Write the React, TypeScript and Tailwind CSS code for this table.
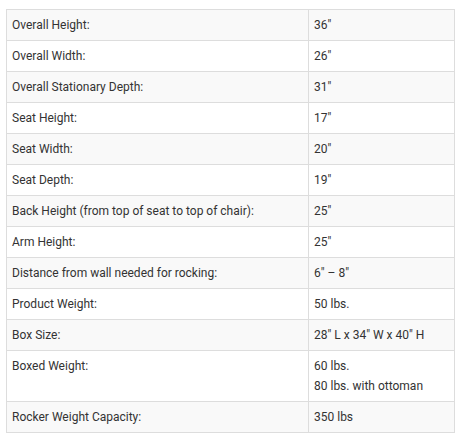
const specs: [string, string[]][] = [
  ["Overall Height:", ['36"']],
  ["Overall Width:", ['26"']],
  ["Overall Stationary Depth:", ['31"']],
  ["Seat Height:", ['17"']],
  ["Seat Width:", ['20"']],
  ["Seat Depth:", ['19"']],
  ["Back Height (from top of seat to top of chair):", ['25"']],
  ["Arm Height:", ['25"']],
  ["Distance from wall needed for rocking:", ['6" – 8"']],
  ["Product Weight:", ["50 lbs."]],
  ["Box Size:", ['28" L x 34" W x 40" H']],
  ["Boxed Weight:", ["60 lbs.", "80 lbs. with ottoman"]],
  ["Rocker Weight Capacity:", ["350 lbs"]],
];

export default function App() {
  return (
    <div className="bg-white pt-[9px] pl-[6px] w-[463px] h-[440px] font-['Roboto',sans-serif] text-[12px] leading-[20px] text-[#333]">
      <table className="w-[449px] border-collapse border border-[#ddd]">
        <tbody>
          {specs.map(([label, values], i) => (
            <tr key={label} className={i % 2 === 0 ? "bg-[#f9f9f9]" : "bg-white"}>
              <td className="w-[302px] border border-[#ddd] px-[5px] py-[5px] align-top">{label}</td>
              <td className="border border-[#ddd] px-[5px] py-[5px] align-top">
                {values.map((v) => (
                  <div key={v}>{v}</div>
                ))}
              </td>
            </tr>
          ))}
        </tbody>
      </table>
    </div>
  );
}
